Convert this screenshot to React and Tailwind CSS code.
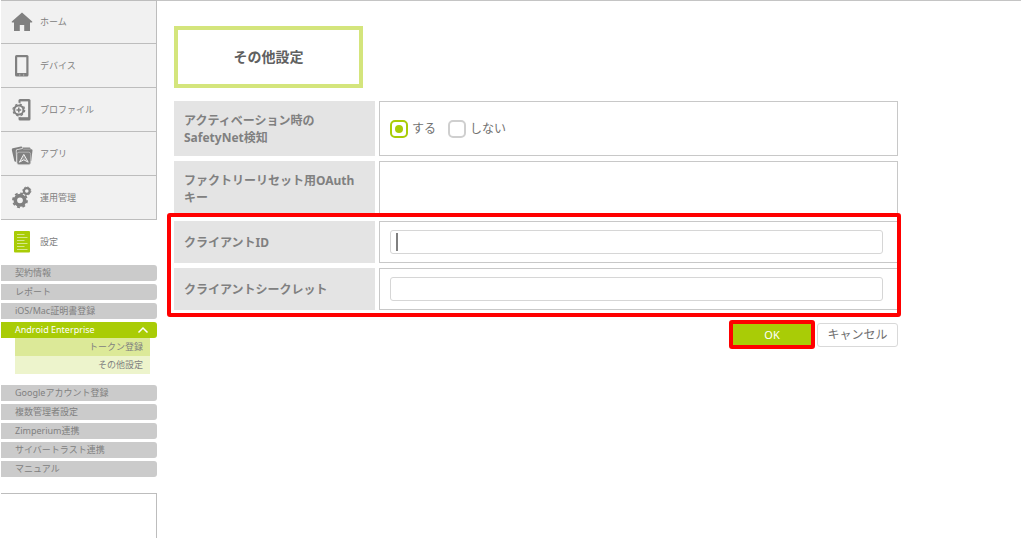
import { useState } from 'react';

function HomeIcon() {
  return (
    <svg className="w-6 h-6" viewBox="0 0 24 24" fill="#808080">
      <path d="M12 2.5 L1.8 11.6 Q1.2 12.6 2.4 12.6 H4 V21 H9.8 V15 H14.2 V21 H20 V12.6 H21.6 Q22.8 12.6 22.2 11.6 Z" />
    </svg>
  );
}

function DeviceIcon() {
  return (
    <svg className="w-6 h-6" viewBox="0 0 24 24">
      <rect x="5" y="1" width="13.5" height="21.5" rx="1.5" fill="#808080" />
      <rect x="7.2" y="3.2" width="9.1" height="15.8" fill="#f1f1f1" />
      <path d="M9.8 19.8 V22 M13.7 19.8 V22" stroke="#b8b8b8" strokeWidth="0.8" />
    </svg>
  );
}

function ProfileIcon() {
  return (
    <svg className="w-6 h-6" viewBox="0 0 24 24">
      <rect x="8.5" y="1" width="12" height="21.5" rx="1.5" fill="#808080" />
      <rect x="10.5" y="3.4" width="7.6" height="15.8" fill="#f1f1f1" />
      <circle cx="8.8" cy="12" r="7.2" fill="#f1f1f1" />
      <circle cx="8.8" cy="12" r="4.6" fill="none" stroke="#808080" strokeWidth="2" />
      <circle cx="8.8" cy="12" r="5.9" fill="none" stroke="#808080" strokeWidth="1.2" strokeDasharray="2.4 2.23" />
      <path d="M8.8 9.6 V14.4 M6.4 12 H11.2" stroke="#808080" strokeWidth="1.5" />
    </svg>
  );
}

function AppsIcon() {
  return (
    <svg className="w-6 h-6" viewBox="0 0 24 24">
      <path d="M1.8 8 Q1.6 6.6 2.8 6.3 L11 4.6 Q12.2 4.5 12.5 5.6 L12 6.2 L7 7.2 Q5.6 7.6 5.8 9 L6.2 20 L4.4 19.2 Z" fill="#808080" />
      <path d="M6.5 9.2 Q6.4 8 7.6 7.8 L12.4 7 L13 5.6 H19.6 Q20.6 5.6 20.7 7.2 H21.6 Q22.8 7.4 22.5 8.6 L21.2 19 L7.2 20 Z" fill="#808080" />
      <path d="M13.2 7.2 H20.5" stroke="#c4c4c4" strokeWidth="0.6" />
      <rect x="7" y="10.2" width="13.6" height="12.4" rx="2" fill="#808080" stroke="#c4c4c4" strokeWidth="0.7" />
      <path d="M13.8 12.4 L18.2 20.2 L13.8 17.8 L9.4 20.2 Z" fill="#989898" stroke="#f1f1f1" strokeWidth="1" strokeLinejoin="round" />
    </svg>
  );
}

function GearsIcon() {
  return (
    <svg className="w-6 h-6" viewBox="0 0 24 24" fill="none" stroke="#808080">
      <circle cx="10" cy="14.3" r="4.7" strokeWidth="3.6" />
      <circle cx="10" cy="14.3" r="7" strokeWidth="1.8" strokeDasharray="2.9 2.6" />
      <circle cx="16.8" cy="5" r="2.9" strokeWidth="2.2" />
      <circle cx="16.8" cy="5" r="4.1" strokeWidth="0.8" strokeDasharray="1.7 1.52" />
    </svg>
  );
}

function SettingsIcon() {
  return (
    <svg className="w-6 h-6" viewBox="0 0 24 24">
      <rect x="4" y="1" width="16" height="21.5" rx="1" fill="#a9cc06" />
      <path
        d="M7 4.5 H14.5 M7 7.5 H17.5 M7 10.5 H14.5 M7 13.5 H17.5 M7 16.5 H14.5 M7 19.5 H17.5"
        stroke="#d6e888"
        strokeWidth="1"
      />
    </svg>
  );
}

const menu = [
  { label: 'ホーム', Icon: HomeIcon },
  { label: 'デバイス', Icon: DeviceIcon },
  { label: 'プロファイル', Icon: ProfileIcon },
  { label: 'アプリ', Icon: AppsIcon },
  { label: '運用管理', Icon: GearsIcon },
];

const upperLinks = ['契約情報', 'レポート', 'iOS/Mac証明書登録'];
const lowerLinks = ['Googleアカウント登録', '複数管理者設定', 'Zimperium連携', 'サイバートラスト連携', 'マニュアル'];

function SubLink({ label }) {
  return (
    <a href="#" className="block h-4 pl-[14px] rounded-r-[3px] bg-[#cbcbcb] text-[9px] leading-4 text-[#808080] whitespace-nowrap">
      {label}
    </a>
  );
}

function Sidebar() {
  const [open, setOpen] = useState(true);

  return (
    <nav className="w-[156px] shrink-0 flex flex-col">
      <div className="border-t border-r border-[#bdbdbd] bg-[#f1f1f1]">
        {menu.map(({ label, Icon }) => (
          <a key={label} href="#" className="flex items-center gap-[6px] h-11 pl-[9px] border-b border-[#bdbdbd] text-[9px] text-[#808080] first:h-[43px]">
            <Icon />
            {label}
          </a>
        ))}
      </div>
      <a href="#" className="flex items-center gap-[6px] h-11 pl-[9px] text-[9px] text-[#808080]">
        <SettingsIcon />
        設定
      </a>

      {/* 設定サブメニュー */}
      <div className="flex flex-col gap-[3px] pt-px">
        {upperLinks.map((label) => <SubLink key={label} label={label} />)}
        <div>
          <button
            type="button"
            aria-expanded={open}
            onClick={() => setOpen(!open)}
            className="flex items-center justify-between w-full h-4 pl-[14px] pr-2 rounded-r-[3px] bg-[#a9cc06] text-[9px] leading-4 text-white"
          >
            Android Enterprise
            <svg className="w-3 h-2" viewBox="0 0 12 8" fill="none" stroke="white" strokeWidth="1.5">
              <path d="M1.5 6.5 L6 2 L10.5 6.5" />
            </svg>
          </button>
          {open && (
            <div className="ml-[14px] mr-[7px] text-right text-[9px] leading-[18px] text-[#808080]">
              <a href="#" className="block pr-[7px] bg-[#dce998]">トークン登録</a>
              <a href="#" className="block pr-[7px] bg-[#edf4cc]">その他設定</a>
            </div>
          )}
        </div>
      </div>
      <div className="flex flex-col gap-[3px] pt-[11px] pb-4">
        {lowerLinks.map((label) => <SubLink key={label} label={label} />)}
      </div>
      <div className="h-[45px] border-t border-r border-[#bdbdbd]" />
    </nav>
  );
}

function Row({ label, htmlFor, tall, children }) {
  const Label = htmlFor ? 'label' : 'div';
  return (
    <div className={tall ? 'flex gap-1 h-[55px]' : 'flex gap-1 h-[42px]'}>
      <Label htmlFor={htmlFor} className="flex items-center w-[201px] shrink-0 pl-[10px] pr-5 bg-[#e4e4e4] text-[12px] leading-[17px] font-bold text-[#808080]">
        {label}
      </Label>
      <div className="flex flex-1 items-center pl-[10px] pr-[14px] border border-[#c8c8c8]">
        {children}
      </div>
    </div>
  );
}

function Radio({ label, ...props }) {
  return (
    <label className="flex items-center gap-1 text-[12px] text-[#707070]">
      <input
        type="radio"
        name="safetynet"
        className="appearance-none grid place-items-center w-[18px] h-[18px] rounded-[5px] border-2 border-[#cfcfcf] bg-white checked:border-[#a9cc06] checked:before:content-[''] checked:before:block checked:before:w-2 checked:before:h-2 checked:before:rounded-full checked:before:bg-[#a9cc06]"
        {...props}
      />
      {label}
    </label>
  );
}

function TextField({ id, caret }) {
  return (
    <div className="relative flex-1">
      <input id={id} type="text" className="block w-full h-6 px-2 rounded-[3px] border border-[#d6d6d6] text-[12px] text-[#666] outline-none" />
      {caret && <span className="absolute left-[6px] top-[3px] w-[2px] h-[18px] bg-[#808080]" />}
    </div>
  );
}

function App() {
  const [detect, setDetect] = useState('yes');

  return (
    <div className="flex pl-px pr-[3px] bg-white font-['Noto_Sans','Noto_Sans_CJK_JP',sans-serif]">
      <Sidebar />
      <main className="flex-1 pt-[25px] pl-[17px] border-t border-[#c4c4c4]">
        <h1 className="w-[189px] h-[62px] border-4 border-[#d4e57c] text-center text-[14px] leading-[54px] font-bold text-[#606060]">
          その他設定
        </h1>

        <form className="w-full max-w-[724px] mt-[13px]" onSubmit={(e) => e.preventDefault()}>
          <div className="flex flex-col gap-[5px]">
            <Row tall label={<span>アクティベーション時の<br />SafetyNet検知</span>}>
              <div className="flex gap-3">
                <Radio label="する" checked={detect === 'yes'} onChange={() => setDetect('yes')} />
                <Radio label="しない" checked={detect === 'no'} onChange={() => setDetect('no')} />
              </div>
            </Row>
            <Row tall label={<span>ファクトリーリセット用OAuth<br />キー</span>} />
            <div className="relative flex flex-col gap-[5px]">
              <Row label="クライアントID" htmlFor="client-id">
                <TextField id="client-id" caret />
              </Row>
              <Row label="クライアントシークレット" htmlFor="client-secret">
                <TextField id="client-secret" />
              </Row>
              {/* 入力箇所の強調枠 */}
              <div className="absolute -top-2 -bottom-[7px] -left-[7px] -right-[3px] rounded-[3px] border-4 border-[#ff0000] pointer-events-none" />
            </div>
          </div>

          <div className="flex justify-end items-center gap-[2px] mt-[10px]">
            <button type="submit" className="w-[86px] h-[29px] rounded-[3px] border-4 border-[#ff0000] bg-[#a9cc06] text-[11px] leading-none text-white">
              OK
            </button>
            <button type="button" className="w-[81px] h-6 rounded-[3px] border border-[#d9d9d9] bg-white text-[12px] leading-none text-[#707070]">
              キャンセル
            </button>
          </div>
        </form>
      </main>
    </div>
  );
}

export default App;
